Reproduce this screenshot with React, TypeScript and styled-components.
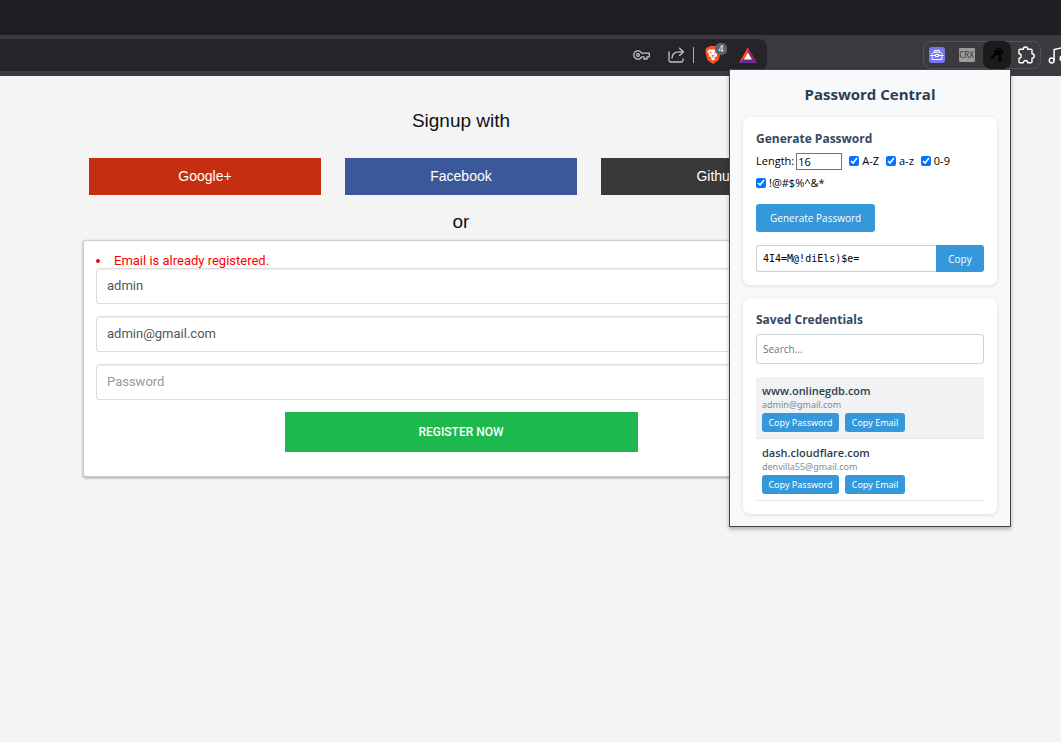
import React from 'react';
import styled, { createGlobalStyle, css } from 'styled-components';

const GlobalStyle = createGlobalStyle`
  * { box-sizing: border-box; }
  body { margin: 0; background: #f4f4f4; font-family: "Liberation Sans", Arial, sans-serif; }
  button, input { font-family: inherit; }
  svg { flex: none; }
`;

const Browser = styled.div`
  position: relative;
  min-height: 100vh;
`;

const TabStrip = styled.div`
  height: 35px;
  background: #1f1e24;
`;

const Toolbar = styled.header`
  display: flex;
  align-items: center;
  justify-content: flex-end;
  height: 41px;
  padding-bottom: 1px;
  background: #3b3a3f;
`;

const AddressBar = styled.div`
  display: flex;
  flex: 1;
  align-items: center;
  justify-content: flex-end;
  height: 32px;
  border-radius: 0 8px 8px 0;
  background: #252429;
`;

const IconButton = styled.button<{ $width: number }>`
  display: flex;
  align-items: center;
  justify-content: center;
  position: relative;
  width: ${(p) => p.$width}px;
  height: 28px;
  padding: 0;
  border: 0;
  background: transparent;
  color: #c4c3c8;
`;

const Divider = styled.span`
  width: 1px;
  height: 16px;
  margin-right: 4px;
  background: #b0afb4;
`;

const Badge = styled.span`
  position: absolute;
  top: 2px;
  right: 1px;
  width: 12px;
  height: 12px;
  border-radius: 5px;
  background: #5d6173;
  color: #ffffff;
  font: 9px/12px "Noto Sans", sans-serif;
  text-align: center;
`;

const Extensions = styled.div`
  display: flex;
  align-items: center;
  height: 28px;
  margin: 0 3px 0 156px;
  border: 1px solid #535257;
  border-radius: 8px;
`;

const ActiveExtension = styled(IconButton)`
  border-radius: 8px;
  background: #1b1b1c;
`;

const CrxLabel = styled.span`
  width: 16px;
  height: 14px;
  border-radius: 1px;
  background: #9b9b9b;
  color: #333333;
  font: 8px/14px "Noto Sans", sans-serif;
  text-align: center;
`;

const MediaSlot = styled.div`
  display: flex;
  width: 17px;
  overflow: hidden;
  padding-left: 4px;
  color: #ffffff;
`;

const Page = styled.main`
  padding: 32px 139px 32px 0;
`;

const SignupColumn = styled.div`
  max-width: 756px;
  margin: 0 auto;
`;

const Heading = styled.h1`
  margin: 0;
  color: #111111;
  font-size: 19px;
  font-weight: 400;
  line-height: 26px;
  text-align: center;
`;

const Providers = styled.div`
  display: grid;
  grid-template-columns: repeat(3, 1fr);
  gap: 24px;
  padding: 24px 6px 14px;
`;

const ProviderButton = styled.button<{ $color: string }>`
  height: 37px;
  padding: 0 0 2px;
  border: 0;
  background: ${(p) => p.$color};
  color: #ffffff;
  font-size: 14px;
`;

const SignupForm = styled.form`
  display: flex;
  flex-direction: column;
  gap: 12px;
  margin-top: 5px;
  padding: 12px 12px 24px;
  border: 1px solid #cccccc;
  border-radius: 3px;
  background: #ffffff;
  box-shadow: 0 1px 3px rgba(0, 0, 0, 0.35);
  font-family: Roboto, sans-serif;
`;

const Errors = styled.ul`
  margin: 0 0 -12px;
  padding: 0;
  color: #ff0000;
  font-size: 13px;
  line-height: 15px;
  list-style: none;
`;

const ErrorItem = styled.li`
  display: flex;
  align-items: center;
  &::before {
    content: '';
    width: 4px;
    height: 4px;
    margin-right: 14px;
    border-radius: 50%;
    background: #ff0000;
  }
`;

const Field = styled.input`
  width: 100%;
  height: 36px;
  padding: 0 10px 2px;
  border: 1px solid #dddddd;
  border-radius: 3px;
  box-shadow: inset 0 1px 1px #eeeeee;
  color: #555555;
  font-size: 13px;
  &::placeholder { color: #999999; }
`;

const RegisterButton = styled.button`
  align-self: center;
  width: 353px;
  max-width: 100%;
  height: 40px;
  border: 0;
  background: #1eb94e;
  color: #ffffff;
  font-size: 12px;
  font-weight: 500;
`;

const Popup = styled.aside`
  position: absolute;
  top: 69px;
  right: 50px;
  display: flex;
  flex-direction: column;
  gap: 13px;
  width: 282px;
  padding: 14px 13px 12px;
  border: 1px solid #45444b;
  background: #f8f9fb;
  box-shadow: 0 2px 4px rgba(0, 0, 0, 0.3);
  color: #000000;
  font-family: "Open Sans", sans-serif;
  font-size: 11px;
`;

const PopupTitle = styled.h2`
  margin: 0;
  color: #2c3e50;
  font-size: 15px;
  font-weight: 700;
  line-height: 20px;
  text-align: center;
`;

const Card = styled.section`
  padding: 13px;
  border-radius: 7px;
  background: #ffffff;
  box-shadow: 0 1px 4px rgba(0, 0, 0, 0.12);
`;

const CardTitle = styled.h3`
  margin: 0;
  color: #34495e;
  font-size: 12px;
  font-weight: 700;
  line-height: 18px;
`;

const Options = styled.div`
  display: flex;
  flex-wrap: wrap;
  align-items: center;
  column-gap: 7px;
  padding: 2px 0 10px;
  line-height: 22px;
`;

const Option = styled.label`
  display: flex;
  align-items: center;
  gap: 2px;
  input[type='checkbox'] {
    width: 10px;
    height: 10px;
    margin: 0 1px 0 0;
    accent-color: #0075ff;
  }
`;

const LengthInput = styled.input`
  width: 46px;
  height: 17px;
  padding: 0 1px;
  border: 1px solid #767676;
  font-size: 11px;
`;

const actionStyle = css`
  border: 0;
  background: #3498db;
  color: #ffffff;
`;

const GenerateButton = styled.button`
  ${actionStyle}
  height: 28px;
  padding: 0 14px;
  border-radius: 3px;
  font-size: 10px;
`;

const ResultRow = styled.div`
  display: flex;
  margin-top: 13px;
`;

const ResultInput = styled.input`
  flex: 1;
  min-width: 0;
  height: 27px;
  padding: 0 6px;
  border: 1px solid #cccfd4;
  border-right: 0;
  border-radius: 3px 0 0 3px;
  font-family: "DejaVu Sans Mono", monospace;
  font-size: 10px;
`;

const CopyButton = styled.button`
  ${actionStyle}
  width: 48px;
  border-radius: 0 3px 3px 0;
  font-size: 10px;
`;

const SearchInput = styled.input`
  width: 100%;
  height: 30px;
  margin: 5px 0 13px;
  padding: 0 6px;
  border: 1px solid #ced4da;
  border-radius: 3px;
  font-size: 10px;
  &::placeholder { color: #757575; }
`;

const Credentials = styled.ul`
  margin: 0;
  padding: 0;
  list-style: none;
`;

const Credential = styled.li<{ $active?: boolean }>`
  padding: 6px;
  border-bottom: 1px solid #e6e8ea;
  background: ${(p) => (p.$active ? '#f1f2f4' : '#ffffff')};
  font-family: "Noto Sans", sans-serif;
`;

const Site = styled.div`
  color: #2c3e50;
  font-family: "Open Sans", sans-serif;
  font-size: 11px;
  font-weight: 600;
  line-height: 16px;
`;

const Email = styled.div`
  color: #7f8c8d;
  font-size: 9px;
  line-height: 12px;
`;

const Actions = styled.div`
  display: grid;
  grid-template-columns: 77px 60px;
  gap: 6px;
  padding-top: 2px;
`;

const SmallButton = styled.button`
  ${actionStyle}
  height: 19px;
  padding: 0;
  border-radius: 3px;
  font-size: 9px;
`;

const KeyIcon = () => (
  <svg width="18" height="12" viewBox="0 0 18 12" fill="none" stroke="currentColor" strokeWidth="1.3">
    <path d="M8.7 4.1A4.2 4.2 0 1 0 8.7 7.9H11V10h3V7.9h2.3V4.1z" strokeLinejoin="round" />
    <circle cx="5" cy="6" r="1.4" />
  </svg>
);

const ShareIcon = () => (
  <svg width="17" height="16" viewBox="0 0 17 16" fill="none" stroke="currentColor" strokeWidth="1.3" strokeLinecap="round" strokeLinejoin="round">
    <path d="M1 5v8.3C1 14.3 1.7 15 2.7 15h10.6c1 0 1.7-.7 1.7-1.7V12M4 11c.2-4 2.6-6.200 7-6.200h4M11.500 1.200 15.500 4.800 11.500 8.400" />
  </svg>
);

const ShieldIcon = () => (
  <svg width="16" height="18" viewBox="0 0 16 18">
    <path d="M4.500 0h7l1.300 1.500 1.500-.2L15.700 4l-.5 1.700.3 1.300-2 7.200L8 18l-5.500-3.800L.5 7l.3-1.300L.3 4l1.400-2.700 1.500.2z" fill="#fb5424" />
    <path d="m4 3.300 2.500.4L8 3.300l1.500.4 2.500-.4 1.700 2.500-1.900 2.600.3 1.600-2.200 1.500.3 1.200L8 14.500l-2.200-1.800.3-1.200L3.900 10l.3-1.600-1.900-2.600z" fill="#fff" />
    <path d="m4.500 6.200 2 .5M11.500 6.200l-2 .5M6.500 9l1.500.7L9.500 9M6.200 11.500 8 10.700l1.800.8" fill="none" stroke="#fb5424" strokeWidth=".9" />
  </svg>
);

const TriangleIcon = () => (
  <svg width="18" height="16" viewBox="0 0 18 16">
    <path d="M9 0 0 16l9-5.500z" fill="#ff4724" />
    <path d="M9 0v5l4.500 8L18 16z" fill="#9e1f63" />
    <path d="M0 16h18l-4.500-4h-9z" fill="#662d91" />
    <path d="m9 5.500 4 7H5z" fill="#fff" />
  </svg>
);

const ToolboxIcon = () => (
  <svg width="16" height="16" viewBox="0 0 16 16">
    <rect width="16" height="16" rx="3" fill="#7776f5" />
    <path d="M5.500 5V3.500h5V5M2.500 7.500l2-2.200h7l2 2.200M3.200 9.500v3h9.600v-3M1.500 8.500h5M9.500 8.500h5M6.500 7.500h3v2h-3z" fill="none" stroke="#fff" />
  </svg>
);

const KeysIcon = () => (
  <svg width="14" height="16" viewBox="0 0 14 16" fill="none" stroke="#000" strokeLinecap="round">
    <path d="M6.500 3.500a2.600 2.600 0 0 1 4.500-1.200" strokeWidth="1.400" />
    <circle cx="6.300" cy="5.800" r="1.700" strokeWidth="1.800" />
    <circle cx="10.500" cy="5.500" r="1.700" strokeWidth="1.800" />
    <path d="M5.200 7 1.500 10.500M2.800 9.500l1 1.200M9.800 7.500l-.5 6.500M9.500 13.300l1.600.1M9.700 11l1.500.1" strokeWidth="1.500" />
  </svg>
);

const PuzzleIcon = () => (
  <svg width="18" height="18" viewBox="0 0 18 18" fill="none" stroke="#fff" strokeWidth="1.400" strokeLinejoin="round">
    <path d="M3 3.200h3.300a2.200 2.200 0 0 1 4.400 0H14a1 1 0 0 1 1 1v3.500a2.200 2.200 0 0 1 0 4.400v3.600a1 1 0 0 1-1 1h-3.300a2.200 2.200 0 0 0-4.400 0H3a1 1 0 0 1-1-1v-3.600a2.200 2.200 0 0 0 0-4.400V4.200a1 1 0 0 1 1-1z" />
  </svg>
);

const NotesIcon = () => (
  <svg width="20" height="18" viewBox="0 0 20 18" fill="none" stroke="currentColor" strokeWidth="1.500">
    <circle cx="3.700" cy="14.500" r="2.400" />
    <circle cx="14.500" cy="12.500" r="2.400" />
    <path d="M6.100 14.500V3.500L17 1v11.500" />
  </svg>
);

const providers = [
  { name: 'Google+', color: '#c32f10' },
  { name: 'Facebook', color: '#3b5998' },
  { name: 'Github', color: '#383838' },
];

const characterSets = ['A-Z', 'a-z', '0-9', '!@#$%^&*'];

const credentials = [
  { site: 'www.onlinegdb.com', email: 'admin@gmail.com', active: true },
  { site: 'dash.cloudflare.com', email: 'denvilla55@gmail.com', active: false },
];

export default function App() {
  return (
    <Browser>
      <GlobalStyle />
      <TabStrip />
      <Toolbar>
        <AddressBar>
          <IconButton $width={34} aria-label="Passwords"><KeyIcon /></IconButton>
          <IconButton $width={34} aria-label="Share"><ShareIcon /></IconButton>
          <Divider />
          <IconButton $width={30} aria-label="Shields">
            <ShieldIcon />
            <Badge>4</Badge>
          </IconButton>
          <IconButton $width={39} aria-label="Rewards"><TriangleIcon /></IconButton>
        </AddressBar>
        <Extensions>
          <IconButton $width={26} aria-label="Toolbox"><ToolboxIcon /></IconButton>
          <IconButton $width={33} aria-label="CRX viewer"><CrxLabel>CRX</CrxLabel></IconButton>
          <ActiveExtension $width={28} aria-label="Password Central"><KeysIcon /></ActiveExtension>
          <IconButton $width={29} aria-label="Extensions"><PuzzleIcon /></IconButton>
        </Extensions>
        <MediaSlot><NotesIcon /></MediaSlot>
      </Toolbar>

      <Page>
        <SignupColumn>
          <Heading>Signup with</Heading>
          <Providers>
            {providers.map((p) => (
              <ProviderButton key={p.name} type="button" $color={p.color}>{p.name}</ProviderButton>
            ))}
          </Providers>
          <Heading as="p">or</Heading>
          <SignupForm>
            <Errors><ErrorItem>Email is already registered.</ErrorItem></Errors>
            <Field aria-label="Username" defaultValue="admin" />
            <Field aria-label="Email" type="email" defaultValue="admin@gmail.com" />
            <Field aria-label="Password" type="password" placeholder="Password" />
            <RegisterButton type="button">REGISTER NOW</RegisterButton>
          </SignupForm>
        </SignupColumn>
      </Page>

      <Popup>
        <PopupTitle>Password Central</PopupTitle>
        <Card>
          <CardTitle>Generate Password</CardTitle>
          <Options>
            <Option>Length: <LengthInput defaultValue="16" /></Option>
            {characterSets.map((set) => (
              <Option key={set}><input type="checkbox" defaultChecked />{set}</Option>
            ))}
          </Options>
          <GenerateButton type="button">Generate Password</GenerateButton>
          <ResultRow>
            <ResultInput aria-label="Generated password" readOnly value="4I4=M@!diEls)$e=" />
            <CopyButton type="button">Copy</CopyButton>
          </ResultRow>
        </Card>
        <Card>
          <CardTitle>Saved Credentials</CardTitle>
          <SearchInput aria-label="Search credentials" placeholder="Search..." />
          <Credentials>
            {credentials.map((c) => (
              <Credential key={c.site} $active={c.active}>
                <Site>{c.site}</Site>
                <Email>{c.email}</Email>
                <Actions>
                  <SmallButton type="button">Copy Password</SmallButton>
                  <SmallButton type="button">Copy Email</SmallButton>
                </Actions>
              </Credential>
            ))}
          </Credentials>
        </Card>
      </Popup>
    </Browser>
  );
}
